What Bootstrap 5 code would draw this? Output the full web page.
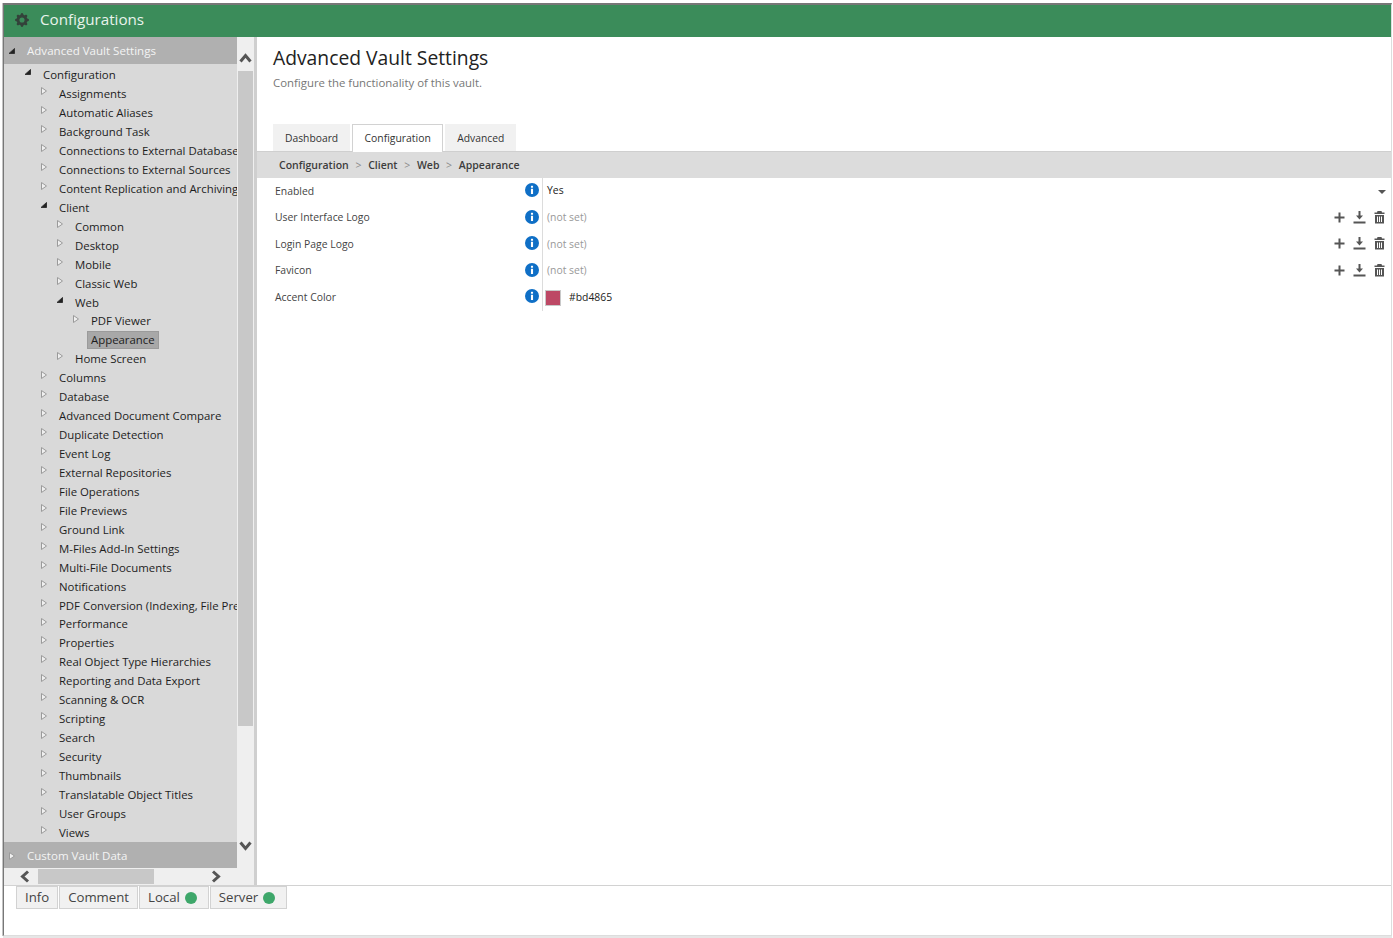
<!DOCTYPE html>
<html lang="en">
<head>
  <meta charset="UTF-8" />
  <meta name="viewport" content="width=device-width, initial-scale=1.0"/>
  <title>Configurations</title>
  <link href="https://cdn.jsdelivr.net/npm/bootstrap@5.3.3/dist/css/bootstrap.min.css" rel="stylesheet" />
  <script src="https://cdn.jsdelivr.net/npm/bootstrap@5.3.3/dist/js/bootstrap.bundle.min.js"></script>
  <style>
    html, body { height: 100%; }
    body { font-family: "Open Sans", "Noto Sans", sans-serif; font-size: 11.4px; color: #222; background: #fff; overflow: hidden; }
    .app-frame { height: 933px; width: 1389px; margin: 3px 0 0 3px; border-top: 2px solid #777; border-left: 1px solid #777; border-right: 1px solid #ddd; border-bottom: 1px solid #ddd; box-shadow: -1px 0 0 #c4c4c4, 0 2px 0 #e6e6e6; }
    .app-head { height: 32px; background: #3b8c5a; color: #e9f3ec; font-size: 15.2px; padding: 0 0 3px 11px; gap: 11px; flex: none; }
    .app-head svg { width: 14px; height: 14px; fill: #33423a; }
    .side-wrap { width: 253px; border-right: 3px solid #cfcfcf; flex: none; background: #efefef; height: 848px; }
    .side-col { width: 233px; height: 831px; background: #d9d9d9; }
    .side-title { height: 26px; background: #b0b0b0; color: #f4f4f4; padding-left: 4px; flex: none; font-size: 11.55px; }
    .side-title span { margin-left: 11px; }
    .side-top { height: 27px; }
    .side-low { padding-top: 1px; }
    .tree-box { flex: 1; padding-top: 1.4px; overflow: hidden; }
    .tree-row { height: 18.95px; white-space: nowrap; display: flex; align-items: center; color: #1d1d1d; }
    .tw { width: 8px; height: 8px; flex: none; margin-right: 11px; margin-top: -5px; }
    .side-title .tw { margin: 0; }
    .lv1 { padding-left: 20px; }
    .lv2 { padding-left: 36px; }
    .lv3 { padding-left: 52px; }
    .lv4 { padding-left: 68px; }
    .tree-pick { background: #a8a8a8; border: 1px solid #9b9b9b; padding: 0 3px; margin-left: -4px; height: 18px; line-height: 16px; }
    .vbar { width: 17px; flex: none; background: #efefef; height: 831px; }
    .vbar-thumb { margin-left: 1px; width: 15px; height: 655px; background: #c8c8c8; }
    .bar-up { height: 34px; padding-top: 8px; flex: none; }
    .bar-down { height: 26px; margin-top: auto; margin-bottom: 9px; flex: none; }
    .vbar svg, .hbar svg { fill: none; stroke: #555; stroke-width: 3; }
    .hbar { height: 17px; }
    .hbar-left { width: 34px; padding-left: 8px; flex: none; }
    .hbar-right { padding-left: 57px; flex: none; }
    .hbar-thumb { width: 116px; height: 15px; background: #c8c8c8; flex: none; }
    .main-pane { min-width: 0; }
    .page-title { font-size: 19.3px; font-weight: 400; line-height: 26px; margin: 8px 0 0 16px; color: #222; }
    .page-sub { color: #777; font-size: 11.4px; margin: 4px 0 0 16px; line-height: 16px; }
    .tab-row { margin: 33px 0 0 16px; gap: 2px; height: 27px; }
    .tab-item { background: #f1f1f1; padding: 2px 12px 0; display: flex; align-items: center; font-size: 10.3px; color: #333; }
    .tab-on { background: #fff; border: 1px solid #d2d2d2; border-bottom: 0; padding: 0 11.4px; position: relative; z-index: 1; height: 28px; font-size: 10.4px; }
    .crumb-bar { height: 27px; background: #dcdcdc; border-top: 1px solid #cfcfcf; padding: 1px 0 0 22px; gap: 6.7px; font-size: 10.5px; font-weight: 600; color: #3d3d3d; }
    .crumb-sep { color: #8a8a8a; font-weight: 400; }
    .prop-row { height: 26.5px; }
    .prop-name { width: 250px; padding: .6px 0 0 18px; flex: none; color: #444; font-size: 10.4px; }
    .prop-info { width: 35px; flex: none; padding-left: 18px; margin-top: -1.6px; }
    .prop-info svg { width: 14px; height: 14px; display: block; }
    .prop-val { flex: 1; border-left: 1px solid #dcdcdc; height: 100%; padding: .6px 0 0 4px; font-size: 10.4px; }
    .val-up { margin-top: -1px; }
    .not-set { color: #999; }
    .prop-tools { gap: 7px; padding-right: 5px; margin: -1.6px 0 0 auto; }
    .prop-tools svg { width: 13px; height: 13px; fill: #555; display: block; }
    .caret-down { width: 0; height: 0; border-left: 4px solid transparent; border-right: 4px solid transparent; border-top: 4px solid #555; margin-left: auto; margin-right: 5px; }
    .swatch { width: 16px; height: 16px; background: #bd4865; border: 1px solid #c9c9c9; margin-right: 8px; margin-left: -2px; }
    .foot-bar { flex: 1; border-top: 1px solid #d2d2d2; padding-left: 12px; gap: 1px; background: #fff; }
    .foot-tab { height: 23px; background: #f1f1f1; border: 1px solid #d2d2d2; padding: 0 8px; display: flex; align-items: center; gap: 5px; font-size: 13.2px; color: #444; }
    .foot-dot { width: 12px; height: 12px; border-radius: 50%; background: #3ea76a; margin-right: 3px; }
  </style>
</head>
<body>
  <svg width="0" height="0" class="position-absolute">
    <symbol id="tw-closed" viewBox="0 0 8 8"><path d="M1.5 .5 6.5 4 1.5 7.5z" fill="#f0f0f0" stroke="#9a9a9a"/></symbol>
    <symbol id="tw-open" viewBox="0 0 8 8"><path d="M1 6.5 6.5 1.5V6.5z" fill="#222" stroke="#333"/></symbol>
    <symbol id="ic-info" viewBox="0 0 16 16"><circle cx="8" cy="8" r="8" fill="#0f6fc6"/><rect x="6.8" y="6.6" width="2.4" height="6" fill="#fff"/><rect x="6.8" y="3.2" width="2.4" height="2.2" fill="#fff"/></symbol>
    <symbol id="ic-plus" viewBox="0 0 13 13"><path d="M5.500 1.500h2v4H11.500v2H7.500v4h-2v-4H1.500v-2h4z"/></symbol>
    <symbol id="ic-down" viewBox="0 0 13 13"><path d="M5.500 0h2v4.500H10L6.500 8.500 3 4.500h2.500zM.5 10.500h12v2H.5z"/></symbol>
    <symbol id="ic-trash" viewBox="0 0 13 13"><path d="M4.500 0h4l.5 1.500h2.500V3h-10V1.500H4zM2 4h9v8.500H2zm2 1.500V11h1V5.500zm2 0V11h1V5.500zm2 0V11h1V5.500z" fill-rule="evenodd"/></symbol>
  </svg>

  <div class="app-frame d-flex flex-column">
    <div class="app-head d-flex align-items-center">
      <svg viewBox="0 0 16 16"><path d="M9.405 1.05c-.413-1.4-2.397-1.4-2.81 0l-.1.34a1.464 1.464 0 0 1-2.105.872l-.31-.17c-1.283-.698-2.686.705-1.987 1.987l.169.311c.446.82.023 1.841-.872 2.105l-.34.1c-1.4.413-1.4 2.397 0 2.81l.34.1a1.464 1.464 0 0 1 .872 2.105l-.17.31c-.698 1.283.705 2.686 1.987 1.987l.311-.169a1.464 1.464 0 0 1 2.105.872l.1.34c.413 1.4 2.397 1.4 2.81 0l.1-.34a1.464 1.464 0 0 1 2.105-.872l.31.17c1.283.698 2.686-.705 1.987-1.987l-.169-.311a1.464 1.464 0 0 1 .872-2.105l.34-.1c1.4-.413 1.4-2.397 0-2.81l-.34-.1a1.464 1.464 0 0 1-.872-2.105l.17-.31c.698-1.283-.705-2.686-1.987-1.987l-.311.169a1.464 1.464 0 0 1-2.105-.872l-.1-.34zM8 10.93a2.929 2.929 0 1 1 0-5.86 2.929 2.929 0 0 1 0 5.858z"/></svg>
      <span>Configurations</span>
    </div>

    <div class="d-flex">
      <div class="side-wrap">
        <div class="d-flex">
          <div class="side-col d-flex flex-column overflow-hidden">
            <div class="side-title side-top d-flex align-items-center"><svg class="tw"><use href="#tw-open"/></svg><span>Advanced Vault Settings</span></div>
            <div class="tree-box">
              <div class="tree-row lv1"><svg class="tw"><use href="#tw-open"/></svg>Configuration</div>
              <div class="tree-row lv2"><svg class="tw"><use href="#tw-closed"/></svg>Assignments</div>
              <div class="tree-row lv2"><svg class="tw"><use href="#tw-closed"/></svg>Automatic Aliases</div>
              <div class="tree-row lv2"><svg class="tw"><use href="#tw-closed"/></svg>Background Task</div>
              <div class="tree-row lv2"><svg class="tw"><use href="#tw-closed"/></svg>Connections to External Databases</div>
              <div class="tree-row lv2"><svg class="tw"><use href="#tw-closed"/></svg>Connections to External Sources</div>
              <div class="tree-row lv2"><svg class="tw"><use href="#tw-closed"/></svg>Content Replication and Archiving</div>
              <div class="tree-row lv2"><svg class="tw"><use href="#tw-open"/></svg>Client</div>
              <div class="tree-row lv3"><svg class="tw"><use href="#tw-closed"/></svg>Common</div>
              <div class="tree-row lv3"><svg class="tw"><use href="#tw-closed"/></svg>Desktop</div>
              <div class="tree-row lv3"><svg class="tw"><use href="#tw-closed"/></svg>Mobile</div>
              <div class="tree-row lv3"><svg class="tw"><use href="#tw-closed"/></svg>Classic Web</div>
              <div class="tree-row lv3"><svg class="tw"><use href="#tw-open"/></svg>Web</div>
              <div class="tree-row lv4"><svg class="tw"><use href="#tw-closed"/></svg>PDF Viewer</div>
              <div class="tree-row lv4"><span class="tw"></span><span class="tree-pick">Appearance</span></div>
              <div class="tree-row lv3"><svg class="tw"><use href="#tw-closed"/></svg>Home Screen</div>
              <div class="tree-row lv2"><svg class="tw"><use href="#tw-closed"/></svg>Columns</div>
              <div class="tree-row lv2"><svg class="tw"><use href="#tw-closed"/></svg>Database</div>
              <div class="tree-row lv2"><svg class="tw"><use href="#tw-closed"/></svg>Advanced Document Compare</div>
              <div class="tree-row lv2"><svg class="tw"><use href="#tw-closed"/></svg>Duplicate Detection</div>
              <div class="tree-row lv2"><svg class="tw"><use href="#tw-closed"/></svg>Event Log</div>
              <div class="tree-row lv2"><svg class="tw"><use href="#tw-closed"/></svg>External Repositories</div>
              <div class="tree-row lv2"><svg class="tw"><use href="#tw-closed"/></svg>File Operations</div>
              <div class="tree-row lv2"><svg class="tw"><use href="#tw-closed"/></svg>File Previews</div>
              <div class="tree-row lv2"><svg class="tw"><use href="#tw-closed"/></svg>Ground Link</div>
              <div class="tree-row lv2"><svg class="tw"><use href="#tw-closed"/></svg>M-Files Add-In Settings</div>
              <div class="tree-row lv2"><svg class="tw"><use href="#tw-closed"/></svg>Multi-File Documents</div>
              <div class="tree-row lv2"><svg class="tw"><use href="#tw-closed"/></svg>Notifications</div>
              <div class="tree-row lv2"><svg class="tw"><use href="#tw-closed"/></svg>PDF Conversion (Indexing, File Preview)</div>
              <div class="tree-row lv2"><svg class="tw"><use href="#tw-closed"/></svg>Performance</div>
              <div class="tree-row lv2"><svg class="tw"><use href="#tw-closed"/></svg>Properties</div>
              <div class="tree-row lv2"><svg class="tw"><use href="#tw-closed"/></svg>Real Object Type Hierarchies</div>
              <div class="tree-row lv2"><svg class="tw"><use href="#tw-closed"/></svg>Reporting and Data Export</div>
              <div class="tree-row lv2"><svg class="tw"><use href="#tw-closed"/></svg>Scanning &amp; OCR</div>
              <div class="tree-row lv2"><svg class="tw"><use href="#tw-closed"/></svg>Scripting</div>
              <div class="tree-row lv2"><svg class="tw"><use href="#tw-closed"/></svg>Search</div>
              <div class="tree-row lv2"><svg class="tw"><use href="#tw-closed"/></svg>Security</div>
              <div class="tree-row lv2"><svg class="tw"><use href="#tw-closed"/></svg>Thumbnails</div>
              <div class="tree-row lv2"><svg class="tw"><use href="#tw-closed"/></svg>Translatable Object Titles</div>
              <div class="tree-row lv2"><svg class="tw"><use href="#tw-closed"/></svg>User Groups</div>
              <div class="tree-row lv2"><svg class="tw"><use href="#tw-closed"/></svg>Views</div>
            </div>
            <div class="side-title side-low d-flex align-items-center"><svg class="tw"><use href="#tw-closed"/></svg><span>Custom Vault Data</span></div>
          </div>
          <div class="vbar d-flex flex-column">
            <div class="bar-up d-flex align-items-center justify-content-center"><svg width="13" height="10" viewBox="0 0 13 10"><path d="M1.500 8.500 6.500 2.500l5 6"/></svg></div>
            <div class="vbar-thumb"></div>
            <div class="bar-down d-flex align-items-center justify-content-center"><svg width="13" height="10" viewBox="0 0 13 10"><path d="M1.500 1.500l5 6 5-6"/></svg></div>
          </div>
        </div>
        <div class="hbar d-flex align-items-center">
          <div class="hbar-left d-flex justify-content-center"><svg width="10" height="13" viewBox="0 0 10 13"><path d="M8 1.500 2.500 6.500 8 11.500"/></svg></div>
          <div class="hbar-thumb"></div>
          <div class="hbar-right d-flex"><svg width="10" height="13" viewBox="0 0 10 13"><path d="M2 1.500l5.500 5-5.500 5"/></svg></div>
        </div>
      </div>

      <div class="main-pane flex-grow-1">
        <h1 class="page-title">Advanced Vault Settings</h1>
        <p class="page-sub">Configure the functionality of this vault.</p>
        <div class="tab-row d-flex">
          <div class="tab-item">Dashboard</div>
          <div class="tab-item tab-on">Configuration</div>
          <div class="tab-item">Advanced</div>
        </div>
        <div class="crumb-bar d-flex align-items-center">
          <span>Configuration</span><span class="crumb-sep">&gt;</span><span>Client</span><span class="crumb-sep">&gt;</span><span>Web</span><span class="crumb-sep">&gt;</span><span>Appearance</span>
        </div>
        <div class="prop-row d-flex align-items-center">
          <div class="prop-name">Enabled</div>
          <div class="prop-info"><svg><use href="#ic-info"/></svg></div>
          <div class="prop-val d-flex align-items-center"><span class="val-up">Yes</span><span class="caret-down"></span></div>
        </div>
        <div class="prop-row d-flex align-items-center">
          <div class="prop-name">User Interface Logo</div>
          <div class="prop-info"><svg><use href="#ic-info"/></svg></div>
          <div class="prop-val d-flex align-items-center"><span class="not-set">(not set)</span>
            <div class="prop-tools d-flex"><svg><use href="#ic-plus"/></svg><svg><use href="#ic-down"/></svg><svg><use href="#ic-trash"/></svg></div></div>
        </div>
        <div class="prop-row d-flex align-items-center">
          <div class="prop-name">Login Page Logo</div>
          <div class="prop-info"><svg><use href="#ic-info"/></svg></div>
          <div class="prop-val d-flex align-items-center"><span class="not-set">(not set)</span>
            <div class="prop-tools d-flex"><svg><use href="#ic-plus"/></svg><svg><use href="#ic-down"/></svg><svg><use href="#ic-trash"/></svg></div></div>
        </div>
        <div class="prop-row d-flex align-items-center">
          <div class="prop-name">Favicon</div>
          <div class="prop-info"><svg><use href="#ic-info"/></svg></div>
          <div class="prop-val d-flex align-items-center"><span class="not-set">(not set)</span>
            <div class="prop-tools d-flex"><svg><use href="#ic-plus"/></svg><svg><use href="#ic-down"/></svg><svg><use href="#ic-trash"/></svg></div></div>
        </div>
        <div class="prop-row d-flex align-items-center">
          <div class="prop-name">Accent Color</div>
          <div class="prop-info"><svg><use href="#ic-info"/></svg></div>
          <div class="prop-val d-flex align-items-center"><span class="swatch"></span>#bd4865</div>
        </div>
      </div>
    </div>

    <div class="foot-bar d-flex align-items-start">
      <div class="foot-tab">Info</div>
      <div class="foot-tab">Comment</div>
      <div class="foot-tab">Local<span class="foot-dot"></span></div>
      <div class="foot-tab">Server<span class="foot-dot"></span></div>
    </div>
  </div>
</body>
</html>
